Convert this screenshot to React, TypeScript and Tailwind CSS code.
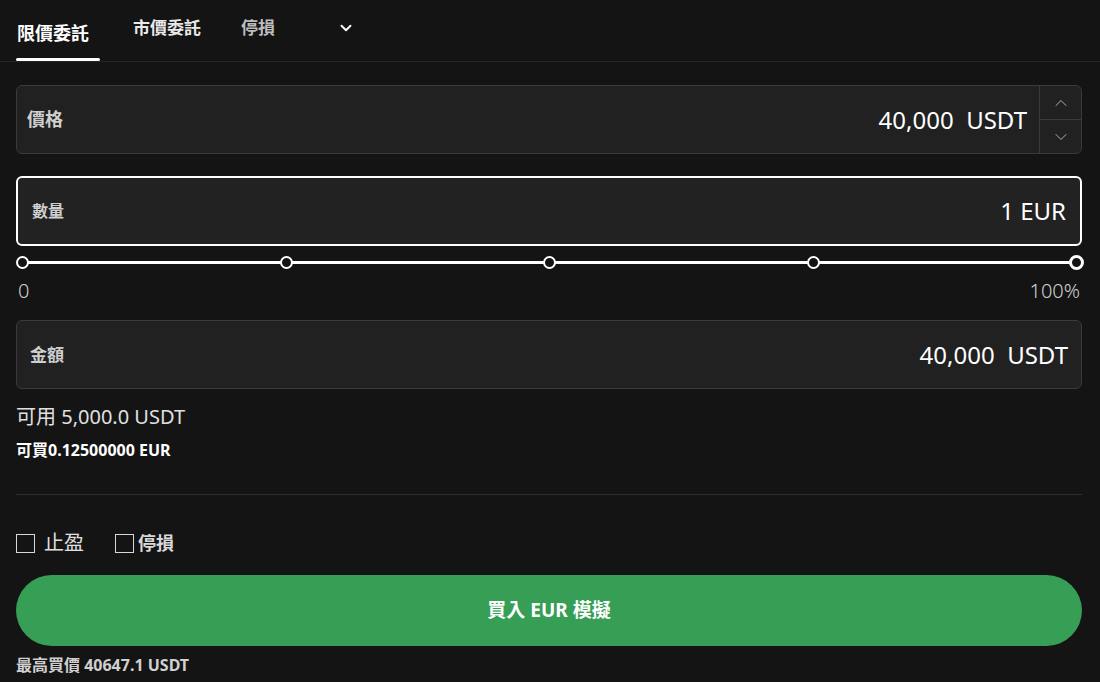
import { ChevronDown, ChevronUp } from "lucide-react";

const font = { fontFamily: '"Noto Sans", "Noto Sans CJK TC", sans-serif' };

const Stops = [0, 25, 50, 75, 100];

export default function App() {
    return (
        <div className="w-[1100px] h-[682px] overflow-hidden bg-[#141414] text-white" style={font}>
            {/* tabs */}
            <div className="flex items-end border-b border-[#262626] pl-4 h-[62px]">
                <div className="flex flex-col items-start">
                    <span className="px-[1px] text-[18px] font-bold leading-none text-white">限價委託</span>
                    <div className="mt-[16px] h-[3px] w-[84px] bg-white rounded-sm" />
                </div>
                <span className="ml-[33px] mb-[25px] text-[17px] font-bold leading-none text-[#e8e8e8]">市價委託</span>
                <span className="ml-[40px] mb-[25px] text-[17px] font-bold leading-none text-[#bdbdbd]">停損</span>
                <ChevronDown className="ml-[62px] mb-[24px] text-white" size={18} strokeWidth={2.5} />
            </div>

            <div className="pl-4 pr-[18px] pt-[23px]">
                {/* price */}
                <div className="flex h-[69px] rounded-md border border-[#3a3a3a] bg-[#212121]">
                    <span className="self-center ml-[10px] text-[18px] font-bold text-[#cfcfcf]">價格</span>
                    <span className="ml-auto self-center mr-[12px] text-[24px] text-white">40,000&nbsp;&nbsp;USDT</span>
                    <div className="flex flex-col w-[42px] border-l border-[#3a3a3a]">
                        <div className="flex-1 flex items-center justify-center border-b border-[#3a3a3a]">
                            <ChevronUp size={20} strokeWidth={1.1} className="text-[#bbb]" />
                        </div>
                        <div className="flex-1 flex items-center justify-center">
                            <ChevronDown size={20} strokeWidth={1.1} className="text-[#bbb]" />
                        </div>
                    </div>
                </div>

                {/* quantity */}
                <div className="mt-[22px] flex items-center h-[70px] rounded-md border-2 border-white bg-[#222222] px-[14px]">
                    <span className="text-[16px] font-bold text-[#cfcfcf]">數量</span>
                    <span className="ml-auto text-[24px] text-white">1 EUR</span>
                </div>

                {/* slider */}
                <div className="relative mt-[9px] h-[14px] mx-[6px]">
                    <div className="absolute left-0 right-0 top-[6px] h-[3px] bg-white" />
                    {Stops.map((s, i) => (
                        <div
                            key={s}
                            className={
                                i === 4
                                    ? "absolute top-[0px] w-[15px] h-[15px] -ml-[7px] rounded-full border-[3px] border-white bg-[#141414]"
                                    : "absolute top-[1px] w-[13px] h-[13px] -ml-[6px] rounded-full border-2 border-white bg-[#141414]"
                            }
                            style={{ left: `${s}%` }}
                        />
                    ))}
                </div>
                <div className="flex justify-between mt-[12px] text-[20px] font-light text-[#d0d0d0] leading-none px-[2px]">
                    <span>0</span>
                    <span>100%</span>
                </div>

                {/* amount */}
                <div className="mt-[19px] flex items-center h-[69px] rounded-md border border-[#3a3a3a] bg-[#212121] px-[13px]">
                    <span className="text-[17px] font-bold text-[#cfcfcf]">金額</span>
                    <span className="ml-auto text-[24px] text-white">40,000&nbsp;&nbsp;USDT</span>
                </div>

                <div className="mt-[18px] text-[20px] text-[#e0e0e0] leading-none">可用 5,000.0 USDT</div>
                <div className="mt-[15px] text-[16px] font-bold text-white leading-none">可買0.12500000 EUR</div>

                <div className="mt-[36px] h-px bg-[#2c2c2c]" />

                {/* checkboxes */}
                <div className="mt-[38px] flex items-center h-[20px]">
                    <div className="w-[19px] h-[19px] border-[1.5px] border-[#d8d8d8]" />
                    <span className="ml-[9px] text-[20px] text-[#e0e0e0] leading-none">止盈</span>
                    <div className="ml-[31px] w-[19px] h-[19px] border-[1.5px] border-[#d8d8d8]" />
                    <span className="ml-[4px] text-[18px] font-bold text-[#d8d8d8] leading-none">停損</span>
                </div>

                {/* buy */}
                <button className="mt-[22px] w-full h-[71px] rounded-full bg-[#369e55] flex items-center justify-center text-[19px] font-bold text-white">
                    買入 EUR 模擬
                </button>

                <div className="mt-[11px] text-[16px] font-bold text-[#d0d0d0] leading-none">最高買價 40647.1 USDT</div>
            </div>
        </div>
    );
}
